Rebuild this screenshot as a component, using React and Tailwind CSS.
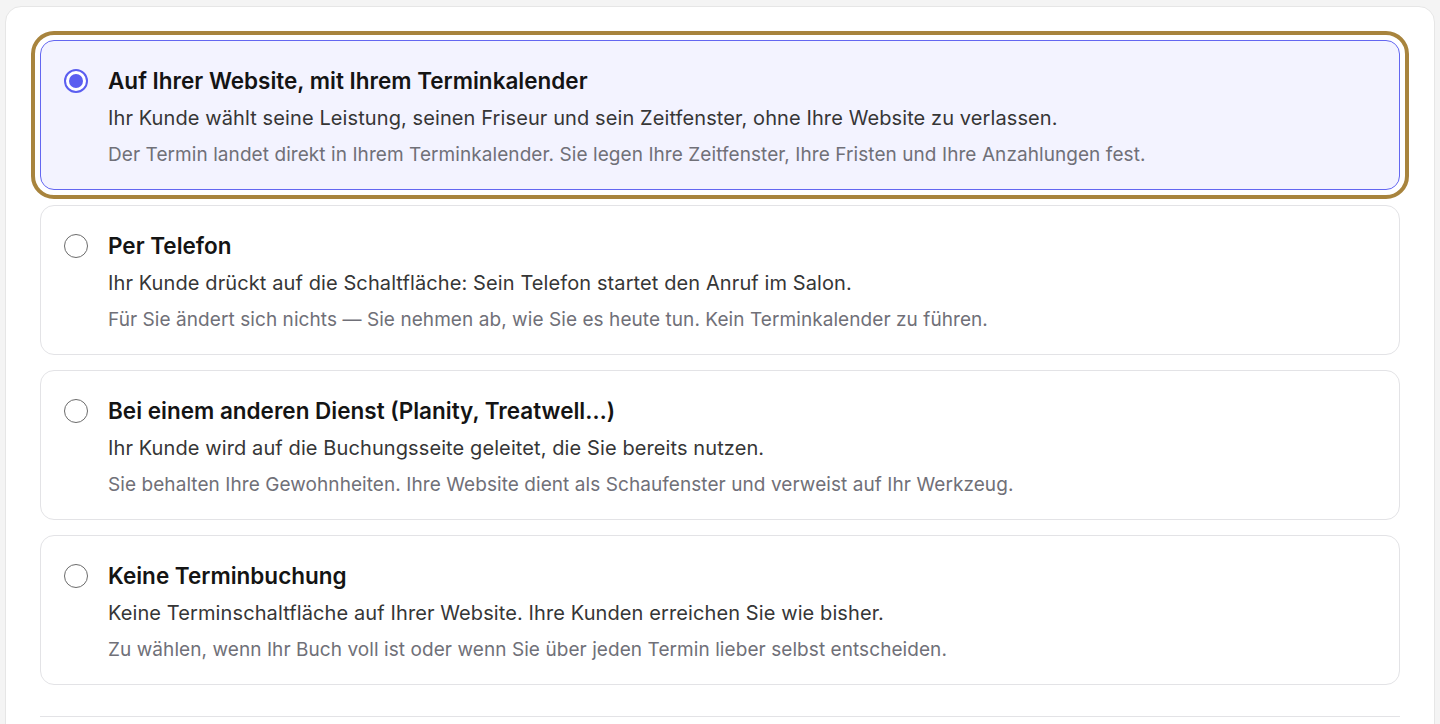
import React from "react";

const options = [
  {
    title: "Auf Ihrer Website, mit Ihrem Terminkalender",
    desc: "Ihr Kunde wählt seine Leistung, seinen Friseur und sein Zeitfenster, ohne Ihre Website zu verlassen.",
    note: "Der Termin landet direkt in Ihrem Terminkalender. Sie legen Ihre Zeitfenster, Ihre Fristen und Ihre Anzahlungen fest.",
    selected: true,
  },
  {
    title: "Per Telefon",
    desc: "Ihr Kunde drückt auf die Schaltfläche: Sein Telefon startet den Anruf im Salon.",
    note: "Für Sie ändert sich nichts — Sie nehmen ab, wie Sie es heute tun. Kein Terminkalender zu führen.",
  },
  {
    title: "Bei einem anderen Dienst (Planity, Treatwell…)",
    desc: "Ihr Kunde wird auf die Buchungsseite geleitet, die Sie bereits nutzen.",
    note: "Sie behalten Ihre Gewohnheiten. Ihre Website dient als Schaufenster und verweist auf Ihr Werkzeug.",
  },
  {
    title: "Keine Terminbuchung",
    desc: "Keine Terminschaltfläche auf Ihrer Website. Ihre Kunden erreichen Sie wie bisher.",
    note: "Zu wählen, wenn Ihr Buch voll ist oder wenn Sie über jeden Termin lieber selbst entscheiden.",
  },
];

function Option({ o }) {
  return (
    <label
      className={
        "flex h-[150px] cursor-pointer gap-5 rounded-[14px] border pl-[23px] pr-6 pt-6 " +
        (o.selected
          ? "border-[#6366f1] bg-[#f3f3ff] outline-4 outline-offset-[5px] outline-[#a8843d]"
          : "border-[#e3e3e6] bg-white")
      }
    >
      <div className="flex h-8 shrink-0 items-center">
        {o.selected ? (
          <span className="flex h-6 w-6 items-center justify-center rounded-full border-2 border-[#5b5ef0] bg-white">
            <span className="h-[14px] w-[14px] rounded-full bg-[#5b5ef0]" />
          </span>
        ) : (
          <span className="h-6 w-6 rounded-full border-[1.5px] border-[#6b6b6b] bg-white" />
        )}
      </div>
      <div className="flex flex-col">
        <div className="text-[22.5px] font-semibold leading-8 text-[#141414]">{o.title}</div>
        <div className="mt-[7px] text-[20px] leading-7 tracking-[0.1px] text-[#363636]">{o.desc}</div>
        <div className="mt-[10px] text-[19px] leading-[26px] tracking-[0.07px] text-[#707078]">{o.note}</div>
      </div>
    </label>
  );
}

export default function App() {
  return (
    <div
      className="min-h-screen bg-[#f4f4f4] px-[5px] pt-[6px]"
      style={{ fontFamily: "Inter, 'Noto Sans', sans-serif" }}
    >
      <div className="rounded-2xl border border-[#e6e6e6] bg-white px-[34px] pt-[33px] pb-10">
        <div className="flex flex-col gap-[15px]">
          {options.map((o) => (
            <Option key={o.title} o={o} />
          ))}
        </div>
        <div className="mt-[31px] border-t border-[#e3e3e6]" />
      </div>
    </div>
  );
}
